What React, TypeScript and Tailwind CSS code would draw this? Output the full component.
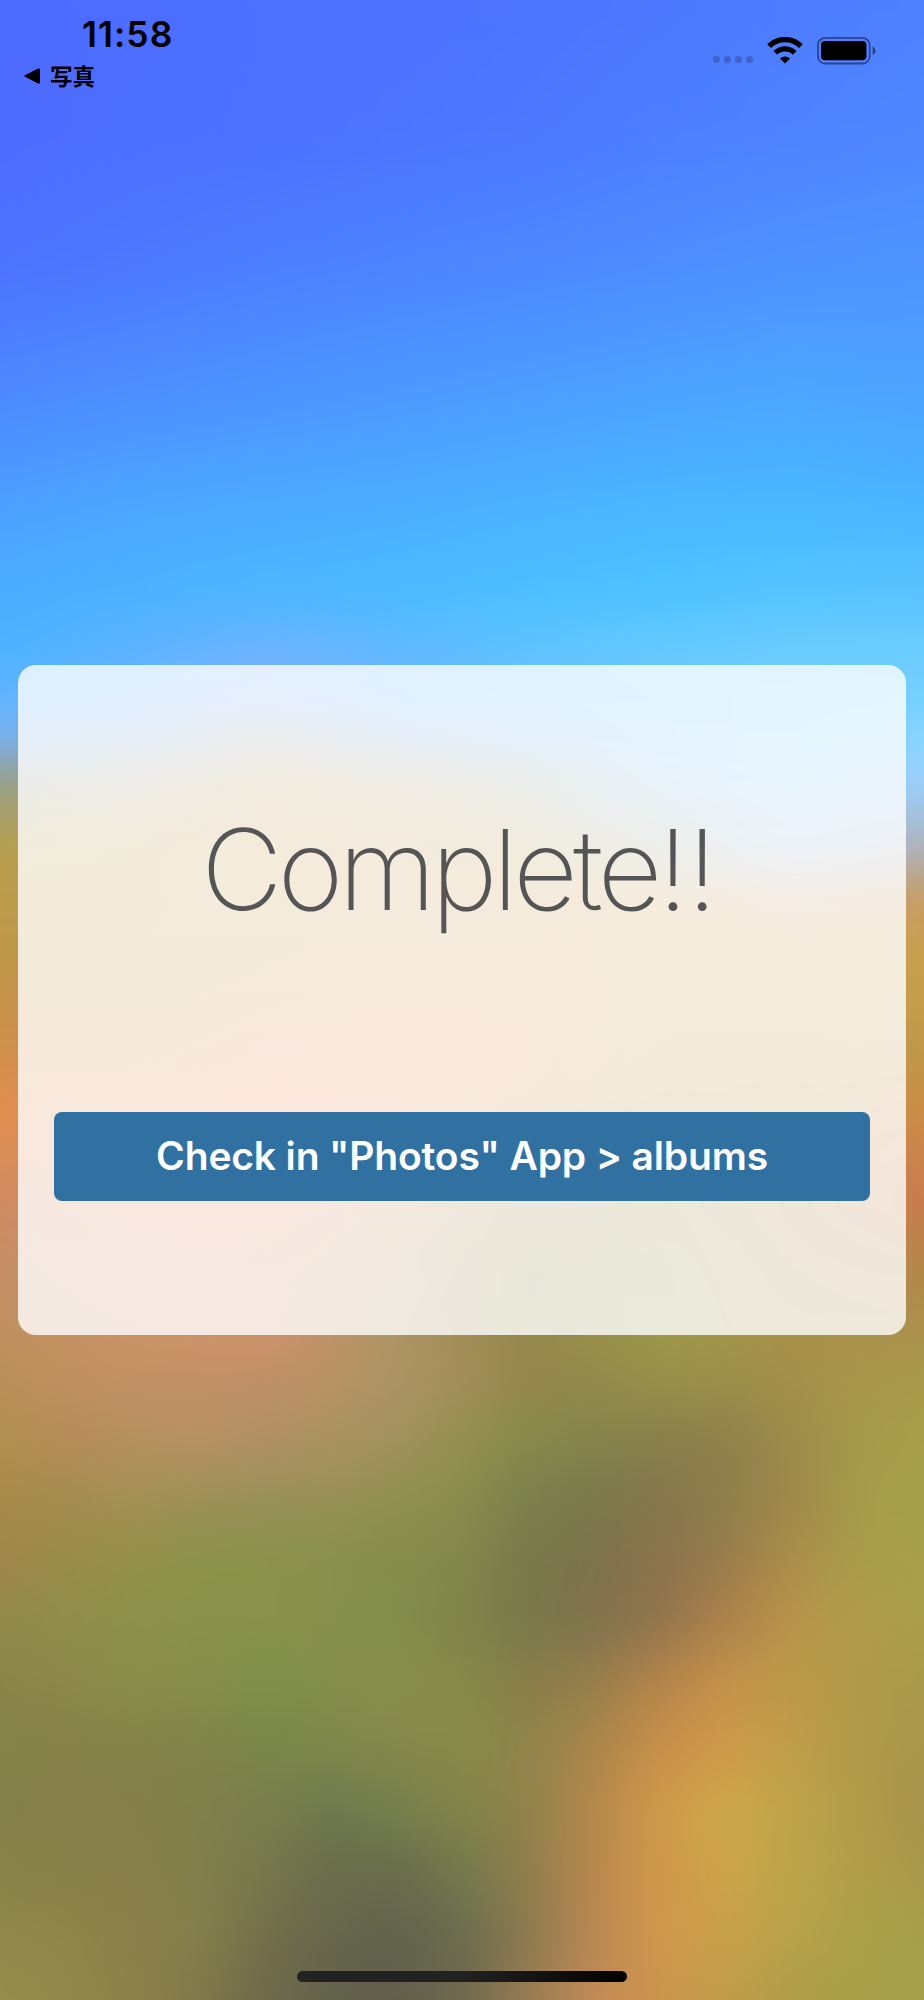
const WIDTH = 924;
const HEIGHT = 2000;

// Blurred wallpaper: each row holds evenly spaced colours and fades into the next one
const WALLPAPER: { y: number; colors: string }[] = [
  { y: 0, colors: "4d6cff 4c6dff 4d70ff 4d70ff 4d74ff 4d78ff 4e7dff 4e80ff" },
  { y: 130, colors: "4d6bff 4d6eff 4d70ff 4d74ff 4d78ff 4e7eff 4e82ff 4e86ff" },
  { y: 260, colors: "4d72ff 4d78ff 4d7eff 4d83ff 4d87ff 4e8cff 4e91ff 4e94ff" },
  { y: 390, colors: "4d88ff 4d8eff 4c93ff 4c98ff 4c9dff 4ca2ff 4ca6ff 4da3ff" },
  { y: 520, colors: "4ca2ff 4ca9ff 4cadff 4cb0ff 4cb5ff 4bb9ff 4abaff 4bb7ff" },
  { y: 590, colors: "4caeff 4db2ff 4db6ff 4cbaff 4cbeff 4dc2ff 55c4ff 5ac2ff" },
  { y: 650, colors: "4db3ff 5bb3ff 6bb3ff 60b9ff 5fc4ff 65caff 6bcbff 6bcdff" },
  { y: 700, colors: "62b4ff 6cb3ff 8ab0f8 70b6ff 6ebeff 70c6ff 74ceff 76d0ff" },
  { y: 740, colors: "7ab0f0 86acd8 96a2a0 84aed8 7cb6f4 80c4ff 84d0ff 88d4ff" },
  { y: 780, colors: "98a088 a8a088 c09c60 b8a074 9caa98 8cc0ec 90d0ff 9cd0ff" },
  { y: 850, colors: "b8a04c c09e4c c89a4c c49c50 b8a055 a6ac90 a4c0e4 b0b0b8" },
  { y: 900, colors: "bc9c4c be9a4c c89a4c cc9b50 cc9b54 d09c52 d2a078 c89c60" },
  { y: 960, colors: "c0984a c09848 c89850 d09850 d29a50 d0a44c cc9c4c c8a04c" },
  { y: 1050, colors: "d0904c cc9048 e08c54 ec8e58 dc9250 c49c48 c09a48 c0984a" },
  { y: 1110, colors: "e28e50 e89050 f88c58 e88e58 d09050 b69444 be923f cc8c48" },
  { y: 1200, colors: "cf8c62 dc8c64 e48c64 c89060 a88a50 a0904a b4884a cc7a50" },
  { y: 1270, colors: "c49068 d89270 d08f68 b89062 908848 9c9848 ac8c4c b48848" },
  { y: 1335, colors: "c0905f c89464 d0936c ad9464 95884b 9c984a a8904a aa924c" },
  { y: 1380, colors: "b88f58 c19060 c49168 c39068 c09069 b89265 ac9464 a48e5c 94864c 908a4c 98904a 9a904a a4904a a8964a a89a4a" },
  { y: 1440, colors: "b09050 b48c58 b49060 b89064 b09064 aa9260 a09260 94904f 868a4c 86844c 88804c 8e804c 9c8c4a a49a4a a69e4a" },
  { y: 1500, colors: "a88a4a a48c50 a49054 9c9058 98905a 989058 909050 8a8c4e 7a804c 7a784c 84764c 8e804c a0884a a49c4a a4a04a" },
  { y: 1560, colors: "a0864a 988c4a 94904a 8c924a 8a924a 88904c 848c4c 82884c 78784a 7c724c 8a734e 9a7c4c ac8e4a a89c4a a6a04a" },
  { y: 1620, colors: "908a4a 908e4a 8c904a 88924a 88924a 86904c 828e4c 80844a 78784a 80724e 92744e ac824a b8944a b09c4a aa9e4a" },
  { y: 1680, colors: "8c844a 8c884a 8a8e4a 868e4a 80904a 848e4c 888e4c 868a4a 887e4a 967e4c b4844a c4924a bc9a4a b09a4a a89a4a" },
  { y: 1750, colors: "84844a 86824a 84824a 80844a 7a864a 7e884c 84884c 888a4a 90844c ac864a ca904a d09a4a c09e4a b09a4a a8964a" },
  { y: 1810, colors: "84804a 88804a 86804a 80804c 787e4c 6e784e 74804c 82844a 90824c b6884c d09a4a cca84a bea44a b29c4a a6924a" },
  { y: 1870, colors: "88844a 88804a 88804a 82804c 76784c 6a6e4c 686c4c 747a4c 907e4c b8884e d0984a cca44a bca44a b29e4a a8984a" },
  { y: 1940, colors: "90884c 90864a 8c804c 84804c 746e4a 66664c 60624e 6a6c4e 8c7a50 ba8854 d0984c c8a04a b8a24a aaa24a a4a04a" },
  { y: 2000, colors: "968c4c 90884a 8c824a 80784a 6e6a4a 62624c 625e4c 70684e 987c52 c48a58 cc944e c09c4a b09c4a a8a04a a4a04a" },
];

function Wallpaper() {
  return (
    <svg className="absolute inset-0" width={WIDTH} height={HEIGHT} viewBox={`0 0 ${WIDTH} ${HEIGHT}`} aria-hidden="true">
      <defs>
        <filter id="soften" filterUnits="userSpaceOnUse" x="-100" y="-100" width="1124" height="2200" colorInterpolationFilters="sRGB">
          <feGaussianBlur stdDeviation="16" />
        </filter>
        {WALLPAPER.map((row, i) => {
          const colors = row.colors.split(" ");
          return (
            <g key={row.y}>
              <linearGradient id={`row-${i}`} gradientUnits="userSpaceOnUse" x1="0" y1="0" x2={WIDTH} y2="0">
                {colors.map((color, n) => (
                  <stop key={n} offset={n / (colors.length - 1)} stopColor={`#${color}`} />
                ))}
              </linearGradient>
              {i > 0 && (
                <>
                  <linearGradient id={`fade-${i}`} gradientUnits="userSpaceOnUse" x1="0" y1={WALLPAPER[i - 1].y} x2="0" y2={row.y}>
                    <stop offset="0" stopColor="#fff" stopOpacity="0" />
                    <stop offset="1" stopColor="#fff" />
                  </linearGradient>
                  <mask id={`mask-${i}`} maskUnits="userSpaceOnUse" x="-60" y="-60" width="1044" height="2120">
                    <rect x="-60" y="-60" width="1044" height="2120" fill={`url(#fade-${i})`} />
                  </mask>
                </>
              )}
            </g>
          );
        })}
      </defs>
      <g filter="url(#soften)">
        {WALLPAPER.map((row, i) => (
          <rect
            key={row.y}
            x="-60"
            y="-60"
            width="1044"
            height="2120"
            fill={`url(#row-${i})`}
            mask={i > 0 ? `url(#mask-${i})` : undefined}
          />
        ))}
      </g>
    </svg>
  );
}

function WifiIcon() {
  return (
    <svg width="36" height="27" viewBox="0 0 36 27" fill="none" stroke="#000">
      <path d="M2.1 9.1a22.6 22.6 0 0 1 31.8 0" strokeWidth="5.4" />
      <path d="M8.3 15.8a13.8 13.8 0 0 1 19.4 0" strokeWidth="5.2" />
      <path d="M18 26.6l-5.1-5.1a7.3 7.3 0 0 1 10.2 0z" fill="#000" stroke="none" />
    </svg>
  );
}

function BatteryIcon() {
  return (
    <svg width="60" height="28" viewBox="0 0 60 28">
      <rect x="0.9" y="0.9" width="51.8" height="25.6" rx="7.2" fill="none" stroke="#000" strokeOpacity="0.45" strokeWidth="1.8" />
      <rect x="4" y="4" width="45.4" height="19.2" rx="4" fill="#000" />
      <path d="M55.7 9.4c3.6 1.7 3.6 7 0 8.7z" fill="#000" fillOpacity="0.5" />
    </svg>
  );
}

function StatusBar() {
  return (
    <header className="flex h-[100px] items-start justify-between pl-6 pr-[47px] text-black">
      <div className="flex flex-col pt-[13px]">
        <span className="pl-[58px] text-[35.5px] font-semibold leading-[44px] tracking-[1px]">11:58</span>
        <div className="mt-[3px] flex items-center gap-[10px]">
          <svg className="mt-px" width="16" height="16" viewBox="0 0 16 16">
            <path d="M1 7.2 14.2.5Q16 0 16 1.6v12.8Q16 16 14.2 15.5L1 8.8Q-.4 8 1 7.2z" />
          </svg>
          <span className="font-['Noto_Sans_CJK_JP',sans-serif] text-[22.5px] font-bold leading-[30px]">写真</span>
        </div>
      </div>
      <div className="flex pt-[37px]">
        <div className="flex gap-1 pt-[19px]">
          {[0, 1, 2, 3].map((dot) => (
            <span key={dot} className="h-[7px] w-[7px] rounded-[3px] bg-black/20" />
          ))}
        </div>
        <div className="ml-[14px]">
          <WifiIcon />
        </div>
        <div className="ml-[14px]">
          <BatteryIcon />
        </div>
      </div>
    </header>
  );
}

export default function App() {
  return (
    <div className="relative h-[2000px] w-[924px] overflow-hidden font-[Inter,'Liberation_Sans',sans-serif]">
      <Wallpaper />
      <div className="relative flex h-full flex-col">
        <StatusBar />

        {/* Result card */}
        <main className="mx-[18px] mt-[565px] flex h-[670px] flex-col items-stretch rounded-[18px] bg-white/80 px-9 pt-[134px]">
          <h1 className="h-[140px] whitespace-nowrap pr-[7px] text-center text-[112px] font-extralight leading-[140px] tracking-[-4.7px] text-[#555555]">
            Complete<span className="tracking-[-1.8px]">!!</span>
          </h1>
          <button className="mt-[172.5px] h-[89.5px] rounded-lg bg-[#3071a2] text-[39px] font-semibold leading-[88px] tracking-[-0.15px] text-white">
            Check in "Photos" App &gt; albums
          </button>
        </main>

        {/* Home indicator */}
        <div className="mx-auto mt-auto mb-[18px] h-[11px] w-[330px] rounded-full bg-linear-to-r from-[#222222] via-[#222222] to-[#040404]" />
      </div>
    </div>
  );
}
